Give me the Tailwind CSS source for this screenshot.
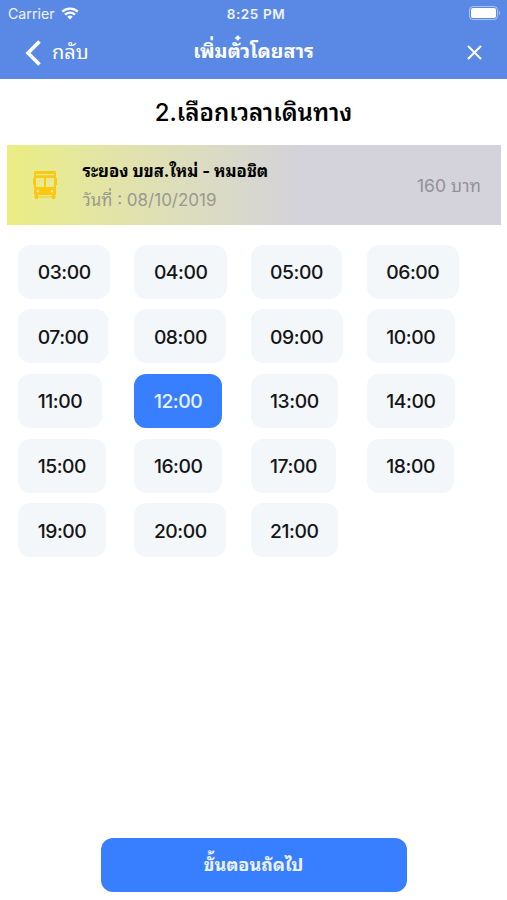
<!DOCTYPE html>
<html lang="th">
<head>
  <meta charset="UTF-8" />
  <title>เพิ่มตั๋วโดยสาร</title>
  <script src="https://cdn.jsdelivr.net/npm/@tailwindcss/browser@4"></script>
</head>
<body class="bg-white font-[Inter,'Noto_Sans_Thai_Looped',Loma,Garuda,Waree,'Noto_Serif_Thai','Noto_Sans_Thai','Noto_Sans',sans-serif]">
  <div class="h-[900px] w-[507px] flex flex-col overflow-hidden">

    <header class="h-[79px] shrink-0 bg-[#5989e5] text-white">
      <div class="h-[27px] grid grid-cols-3 items-center pl-2 pr-1.5 text-[13.5px] leading-none text-white/90">
        <div class="flex items-center gap-1.5">
          <span class="pt-0.5 text-[14.2px]">Carrier</span>
          <svg class="w-[18px] h-[13px]" viewBox="0 0 18 13" fill="none" stroke="white" stroke-width="2.3">
            <path d="M1.2 4.7a11.2 11.2 0 0 1 15.6 0M4 7.7a7.2 7.2 0 0 1 10 0" />
            <path d="M9 12.5 6.3 9.8a4 4 0 0 1 5.4 0z" fill="white" stroke="none" />
          </svg>
        </div>
        <span class="text-center font-semibold tracking-[0.6px] whitespace-nowrap pt-0.5 pl-[3px]">8:25 PM</span>
        <svg class="w-[32px] h-[14px] -mt-px justify-self-end" viewBox="0 0 32 14">
          <rect x="0.5" y="0.5" width="28" height="13" rx="3.5" fill="none" stroke="white" stroke-opacity=".5" />
          <rect x="2" y="2" width="25" height="10" rx="2" fill="white" />
          <path d="M30 4.5q2 2.5 0 5z" fill="white" fill-opacity=".5" />
        </svg>
      </div>
      <div class="h-[52px] grid grid-cols-[1fr_auto_1fr] items-center pl-[25px] pr-[25px]">
        <a href="#" class="flex items-center gap-[11px] text-[20px]">
          <svg class="w-[16px] h-[26px]" viewBox="0 0 16 26" fill="none" stroke="white" stroke-width="3.6">
            <path d="M14.5 1.5 3 13l11.5 11.5" />
          </svg>
          <span class="-mt-0.5">กลับ</span>
        </a>
        <h1 class="-mt-0.5 text-[19.6px] font-bold whitespace-nowrap">เพิ่มตั๋วโดยสาร</h1>
        <svg class="w-[15px] h-[15px] -mt-px justify-self-end" viewBox="0 0 15 15" stroke="white" stroke-width="2.1">
          <path d="M1 1l13 13M14 1 1 14" />
        </svg>
      </div>
    </header>

    <main class="flex-1 flex flex-col">
      <h2 class="h-[66px] pt-0.5 flex items-center justify-center text-[24px] font-semibold whitespace-nowrap"><span class="font-medium">2.</span>เลือกเวลาเดินทาง</h2>

      <section class="h-[80px] ml-[7px] mr-[6px] pl-[26px] pr-[20px] flex items-center bg-linear-to-r from-[#ebed83] to-[#d4d2db] to-60%">
        <svg class="w-[24px] h-[28px]" viewBox="0 0 24 28" fill="#fcc812">
          <path fill-rule="evenodd" d="M2 0h20Q23 0 23 2V24H1V2Q1 0 2 0zM3 3v1.2h18V3zM3 7v9h8V7zM13 7v9h8V7zM5 19a1.3 1.3 0 1 0 .01 0zM19 19a1.3 1.3 0 1 0 .01 0z" />
          <path d="M0 7h1v7H0zM23 7h1v7h-1zM1 25.500h22v1H1zM2 24h3v4H2zM19 24h3v4h-3z" />
        </svg>
        <div class="ml-[25.5px] pt-px flex-1">
          <p class="text-[16.8px] leading-[29px] font-bold whitespace-nowrap">ระยอง บขส.ใหม่ - หมอชิต</p>
          <p class="text-[17px] leading-[29px] text-[#99998f] whitespace-nowrap">วันที่ : 08/10/2019</p>
        </div>
        <span class="pt-[3px] text-[17.5px] text-[#919199] whitespace-nowrap">160 บาท</span>
      </section>

      <div id="times" class="mt-[19.5px] ml-[18.2px] grid grid-cols-[repeat(4,116.2px)] auto-rows-[54px] gap-y-[10.7px]"></div>

      <button class="mt-auto mb-[8.5px] mx-auto w-[306px] h-[54px] rounded-xl bg-[#387fff] text-white/90 text-[18px] font-bold">ขั้นตอนถัดไป</button>
    </main>
  </div>

  <script>
    const times = document.getElementById("times");
    const selected = 12;

    for (let h = 3; h <= 21; h++) {
      const label = String(h).padStart(2, "0") + ":00";
      const color = h === selected ? "bg-[#387fff] text-white/90" : "bg-[#f4f7fa] text-[#151517]";
      times.innerHTML += `<button class="justify-self-start px-[19.5px] pt-[2px] rounded-xl text-[19.3px] font-medium tracking-[-0.45px] ${color}">${label}</button>`;
    }
  </script>
</body>
</html>
